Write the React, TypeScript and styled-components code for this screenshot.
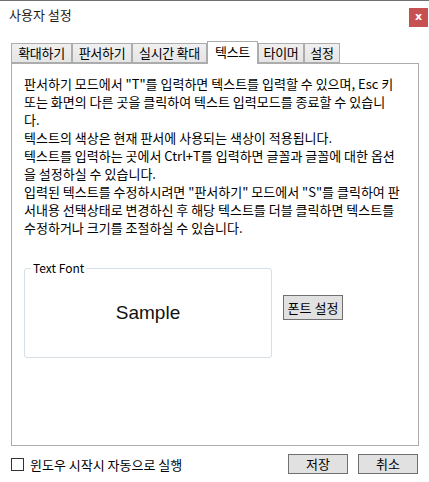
import React, { useState } from "react";
import styled, { createGlobalStyle } from "styled-components";

const GlobalStyle = createGlobalStyle`
  html, body {
    margin: 0;
    padding: 0;
    background: #ffffff;
  }
  body {
    font-family: "Noto Sans CJK KR", "Noto Sans", sans-serif;
    font-size: 13px;
    color: #000;
  }
`;

// 탭 이름과 폭
const TABS = [
  { name: "확대하기", width: 61 },
  { name: "판서하기", width: 60 },
  { name: "실시간 확대", width: 75 },
  { name: "텍스트", width: 51 },
  { name: "타이머", width: 46 },
  { name: "설정", width: 36 },
];

const HELP_LINES = [
  '판서하기 모드에서 "T"를 입력하면 텍스트를 입력할 수 있으며, Esc 키',
  "또는 화면의 다른 곳을 클릭하여 텍스트 입력모드를 종료할 수 있습니",
  "다.",
  "텍스트의 색상은 현재 판서에 사용되는 색상이 적용됩니다.",
  "텍스트를 입력하는 곳에서 Ctrl+T를 입력하면 글꼴과 글꼴에 대한 옵션",
  "을 설정하실 수 있습니다.",
  '입력된 텍스트를 수정하시려면 "판서하기" 모드에서 "S"를 클릭하여 판',
  "서내용 선택상태로 변경하신 후 해당 텍스트를 더블 클릭하면 텍스트를",
  "수정하거나 크기를 조절하실 수 있습니다.",
];

const App = () => {
  const [tab, setTab] = useState<number>(3);
  const [autoStart, setAutoStart] = useState<boolean>(false);

  return (
    <>
      <GlobalStyle />
      <Window>
        <TitleBar>
          <Title>사용자 설정</Title>
          <CloseButton>x</CloseButton>
        </TitleBar>

        <TabStrip>
          {TABS.map((t, i) => (
            <Tab
              key={t.name}
              $active={i === tab}
              $width={t.width}
              onClick={() => setTab(i)}
            >
              {t.name}
            </Tab>
          ))}
        </TabStrip>

        <Panel>
          <HelpText>
            {HELP_LINES.map((line) => (
              <Line key={line}>{line}</Line>
            ))}
          </HelpText>

          <FontRow>
            <FontGroup>
              <Legend>Text Font</Legend>
              <SampleArea>Sample</SampleArea>
            </FontGroup>
            <FontButton>폰트 설정</FontButton>
          </FontRow>
        </Panel>

        <BottomBar>
          <CheckLabel onClick={() => setAutoStart(!autoStart)}>
            <CheckBox>{autoStart ? "✓" : ""}</CheckBox>
            윈도우 시작시 자동으로 실행
          </CheckLabel>
          <ButtonGroup>
            <DialogButton>저장</DialogButton>
            <DialogButton>취소</DialogButton>
          </ButtonGroup>
        </BottomBar>
      </Window>
    </>
  );
};

export default App;

const Window = styled.div`
  width: 429px;
  height: 482px;
  box-sizing: border-box;
  border-top: 1px solid #707070;
  background: #fff;
  display: flex;
  flex-direction: column;
`;

const TitleBar = styled.div`
  height: 40px;
  display: flex;
  justify-content: space-between;
  align-items: flex-start;
  padding: 0 1px 0 9px;
`;

const Title = styled.div`
  margin-top: 5px;
  font-size: 13px;
  line-height: 18px;
  color: #1a1a1a;
`;

const CloseButton = styled.div`
  margin-top: 7px;
  width: 19px;
  height: 19px;
  background: #c75050;
  color: #fff;
  font-family: "DejaVu Sans", sans-serif;
  font-weight: bold;
  font-size: 11px;
  line-height: 17px;
  text-align: center;
`;

const TabStrip = styled.div`
  height: 22px;
  display: flex;
  align-items: flex-end;
  padding-left: 11px;
`;

const Tab = styled.div<{ $active?: boolean; $width: number }>`
  position: relative;
  z-index: ${(p) => (p.$active ? 2 : 0)};
  box-sizing: border-box;
  width: ${(p) => p.$width}px;
  height: ${(p) => (p.$active ? "23px" : "20px")};
  margin-bottom: ${(p) => (p.$active ? "-1px" : "0")};
  border: 1px solid #acacac;
  border-bottom: ${(p) => (p.$active ? "none" : "1px solid #acacac")};
  background: ${(p) =>
    p.$active ? "#ffffff" : "linear-gradient(#f0f0f0, #e5e5e5)"};
  font-size: 13px;
  line-height: ${(p) => (p.$active ? "19px" : "17px")};
  text-align: center;
  white-space: nowrap;
  letter-spacing: -0.3px;
  cursor: default;
`;

const Panel = styled.div`
  position: relative;
  z-index: 1;
  box-sizing: border-box;
  margin-left: 11px;
  width: 408px;
  height: 383px;
  border: 1px solid #acacac;
  padding: 11px 12px 0 12px;
`;

const HelpText = styled.div`
  font-size: 13px;
  line-height: 18px;
`;

const Line = styled.div`
  white-space: nowrap;
`;

const FontRow = styled.div`
  display: flex;
  align-items: flex-start;
  gap: 11px;
  margin-top: 24px;
`;

const FontGroup = styled.fieldset`
  box-sizing: border-box;
  width: 248px;
  margin: 0;
  padding: 0;
  border: 1px solid #d5dfe5;
  border-radius: 3px;
`;

const Legend = styled.legend`
  margin-left: 6px;
  padding: 0 2px;
  font-size: 12px;
  line-height: 14px;
  color: #000;
`;

const SampleArea = styled.div`
  height: 76px;
  padding-bottom: 6px;
  display: flex;
  align-items: center;
  justify-content: center;
  font-family: "Liberation Sans", Arial, sans-serif;
  font-size: 19px;
  color: #111;
`;

const FontButton = styled.button`
  margin-top: 34px;
  box-sizing: border-box;
  width: 60px;
  height: 25px;
  padding: 0;
  border: 1px solid #707070;
  border-radius: 0;
  background: #e1e1e1;
  font-family: "Noto Sans CJK KR", sans-serif;
  font-size: 13px;
  color: #000;
`;

const BottomBar = styled.div`
  flex: 1;
  display: flex;
  align-items: flex-start;
  justify-content: space-between;
  padding: 8px 11px 0 11px;
`;

const CheckLabel = styled.label`
  display: flex;
  align-items: center;
  gap: 6px;
  margin-top: 3px;
  font-size: 13px;
  line-height: 15px;
  cursor: default;
`;

const CheckBox = styled.span`
  box-sizing: border-box;
  width: 13px;
  height: 13px;
  border: 1px solid #333;
  background: #fff;
  font-size: 10px;
  line-height: 11px;
  text-align: center;
`;

const ButtonGroup = styled.div`
  display: flex;
  gap: 10px;
`;

const DialogButton = styled.button`
  box-sizing: border-box;
  width: 60px;
  height: 20px;
  padding: 0;
  border: 1px solid #707070;
  border-radius: 0;
  background: #e1e1e1;
  font-family: "Noto Sans CJK KR", sans-serif;
  font-size: 13px;
  line-height: 16px;
  color: #000;
`;
